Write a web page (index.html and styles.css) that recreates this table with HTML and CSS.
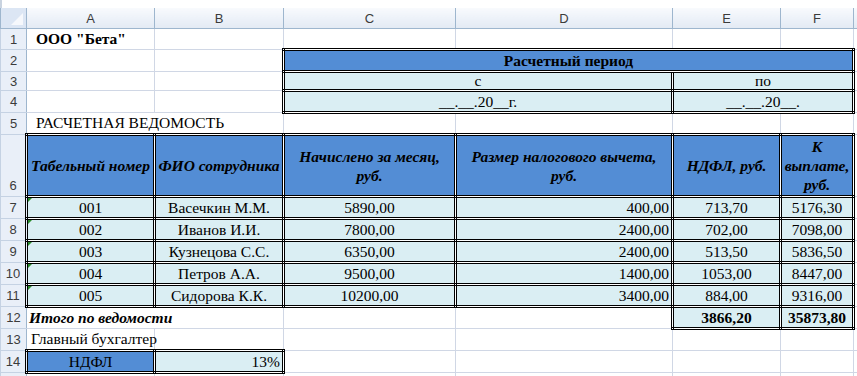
FILE: index.html
```html
<!DOCTYPE html>
<html lang="ru">

<head>
    <meta charset="UTF-8">
    <title>Расчетная ведомость</title>
    <link rel="stylesheet" href="styles.css">
</head>

<body>
    <div class="topbar"></div>
    <table class="sheet">
        <colgroup>
            <col class="c-rh">
            <col class="c-a">
            <col class="c-b">
            <col class="c-c">
            <col class="c-d">
            <col class="c-e">
            <col class="c-f">
            <col class="c-g">
        </colgroup>
        <thead>
            <tr class="colhead">
                <th class="corner"><span class="tri"></span></th>
                <th>A</th>
                <th>B</th>
                <th>C</th>
                <th>D</th>
                <th>E</th>
                <th>F</th>
                <th></th>
            </tr>
        </thead>
        <tbody>
            <tr class="h21">
                <th class="rh">1</th>
                <td class="bold indent">ООО "Бета"</td>
                <td></td><td></td><td></td><td></td><td></td><td></td>
            </tr>
            <tr class="h22">
                <th class="rh">2</th>
                <td></td><td></td>
                <td colspan="4" class="box blue bold">Расчетный период</td>
                <td></td>
            </tr>
            <tr class="h19">
                <th class="rh">3</th>
                <td></td><td></td>
                <td colspan="2" class="box light">с</td>
                <td colspan="2" class="box light">по</td>
                <td></td>
            </tr>
            <tr class="h22">
                <th class="rh">4</th>
                <td></td><td></td>
                <td colspan="2" class="box light">__.__.20__г.</td>
                <td colspan="2" class="box light">__.__.20__.</td>
                <td></td>
            </tr>
            <tr class="h22">
                <th class="rh">5</th>
                <td colspan="2" class="indent">РАСЧЕТНАЯ ВЕДОМОСТЬ</td>
                <td></td><td></td><td></td><td></td><td></td>
            </tr>
            <tr class="h62">
                <th class="rh bottom">6</th>
                <td class="box blue bi">Табельный номер</td>
                <td class="box blue bi">ФИО сотрудника</td>
                <td class="box blue bi">Начислено за месяц,<br>руб.</td>
                <td class="box blue bi">Размер налогового вычета,<br>руб.</td>
                <td class="box blue bi">НДФЛ, руб.</td>
                <td class="box blue bi">К<br>выплате,<br>руб.</td>
                <td></td>
            </tr>
            <tr class="h22">
                <th class="rh">7</th>
                <td class="box light flag">001</td>
                <td class="box light">Васечкин М.М.</td>
                <td class="box light">5890,00</td>
                <td class="box light right">400,00</td>
                <td class="box light">713,70</td>
                <td class="box light">5176,30</td>
                <td></td>
            </tr>
            <tr class="h22">
                <th class="rh">8</th>
                <td class="box light flag">002</td>
                <td class="box light">Иванов И.И.</td>
                <td class="box light">7800,00</td>
                <td class="box light right">2400,00</td>
                <td class="box light">702,00</td>
                <td class="box light">7098,00</td>
                <td></td>
            </tr>
            <tr class="h22">
                <th class="rh">9</th>
                <td class="box light flag">003</td>
                <td class="box light">Кузнецова С.С.</td>
                <td class="box light">6350,00</td>
                <td class="box light right">2400,00</td>
                <td class="box light">513,50</td>
                <td class="box light">5836,50</td>
                <td></td>
            </tr>
            <tr class="h22">
                <th class="rh">10</th>
                <td class="box light flag">004</td>
                <td class="box light">Петров А.А.</td>
                <td class="box light">9500,00</td>
                <td class="box light right">1400,00</td>
                <td class="box light">1053,00</td>
                <td class="box light">8447,00</td>
                <td></td>
            </tr>
            <tr class="h22">
                <th class="rh">11</th>
                <td class="box light flag">005</td>
                <td class="box light">Сидорова К.К.</td>
                <td class="box light">10200,00</td>
                <td class="box light right">3400,00</td>
                <td class="box light">884,00</td>
                <td class="box light">9316,00</td>
                <td></td>
            </tr>
            <tr class="h22">
                <th class="rh">12</th>
                <td colspan="2" class="bi left">Итого по ведомости</td>
                <td></td><td></td>
                <td class="box light bold">3866,20</td>
                <td class="box light bold">35873,80</td>
                <td></td>
            </tr>
            <tr class="h22">
                <th class="rh">13</th>
                <td class="left pad">Главный бухгалтер</td>
                <td></td><td></td><td></td><td></td><td></td><td></td>
            </tr>
            <tr class="h22">
                <th class="rh">14</th>
                <td class="box blue">НДФЛ</td>
                <td class="box light right">13%</td>
                <td></td><td></td><td></td><td></td><td></td>
            </tr>
            <tr class="h22">
                <th class="rh"></th>
                <td></td><td></td><td></td><td></td><td></td><td></td><td></td>
            </tr>
        </tbody>
    </table>
</body>

</html>
```

FILE: styles.css
```css
body {
    margin: 0;
    overflow: hidden;
    background: #fff;
}

/* strip above the column letters */
.topbar {
    height: 8px;
    background: #fff;
    border-left: 2px solid #c9d3e0;
    box-sizing: border-box;
}

.sheet {
    border-collapse: collapse;
    table-layout: fixed;
    width: 877px;
    font-family: "Liberation Serif", "Times New Roman", serif;
    font-size: 15.5px;
    color: #000;
}

.c-rh { width: 26px; }
.c-a { width: 128px; }
.c-b { width: 129px; }
.c-c { width: 172px; }
.c-d { width: 217px; }
.c-e { width: 108px; }
.c-f { width: 73px; }
.c-g { width: 24px; }

.sheet td {
    border: 1px solid #d0d7e5;
    padding: 0 2px;
    text-align: center;
    vertical-align: middle;
    line-height: 16px;
    white-space: nowrap;
    overflow: hidden;
}

/* column letters and row numbers */
.colhead th {
    height: 20px;
    padding: 0;
    font-family: "Liberation Sans", Arial, sans-serif;
    font-size: 13px;
    font-weight: normal;
    color: #3b3b3b;
    background: linear-gradient(#f8fafd, #e3eaf4);
    border: 1px solid #9eb6ce;
    border-top: 0;
}

.colhead .corner {
    position: relative;
    background: #dce6f4;
}

.corner .tri {
    position: absolute;
    right: 3px;
    bottom: 3px;
    border-left: 12px solid transparent;
    border-bottom: 12px solid #f6f8fc;
}

.rh {
    padding: 0;
    font-family: "Liberation Sans", Arial, sans-serif;
    font-size: 13px;
    font-weight: normal;
    color: #3b3b3b;
    background: #e9eff8;
    border: 1px solid #c5d2e3;
    border-right-color: #9eb6ce;
    text-align: center;
    vertical-align: middle;
}

.rh.bottom {
    vertical-align: bottom;
    padding-bottom: 3px;
}

.h19 { height: 19px; }
.h21 { height: 21px; }
.h22 { height: 22px; }
.h62 { height: 62px; }

/* framed cells */
.sheet td.box {
    border: 3px double #000;
}

.blue { background: #538dd5; }
.light { background: #daeef3; }

.bold { font-weight: bold; }

.bi {
    font-weight: bold;
    font-style: italic;
}

.sheet td.blue.bi {
    line-height: 19px;
}

.sheet td.indent {
    text-align: left;
    padding-left: 9px;
}

.sheet td.left { text-align: left; }
.sheet td.right { text-align: right; }

.sheet td.pad {
    padding: 0 0 0 4px;
    overflow: visible;
}

/* number-stored-as-text marker */
.flag { position: relative; }

.flag::before {
    content: "";
    position: absolute;
    left: 0;
    top: 0;
    border-top: 4px solid #2a8c2a;
    border-right: 4px solid transparent;
}
```
